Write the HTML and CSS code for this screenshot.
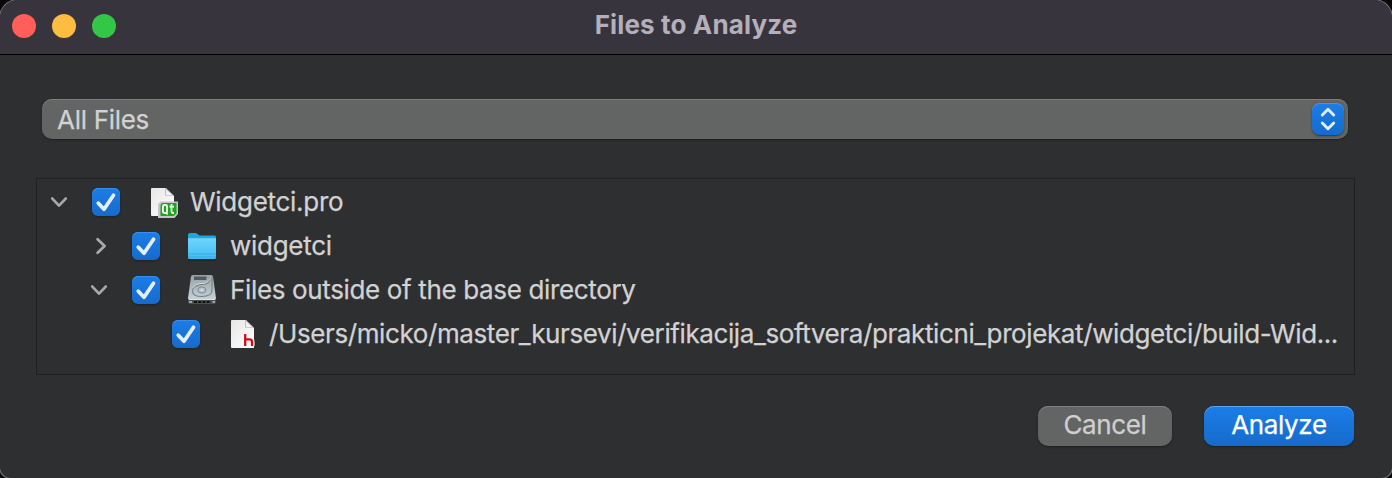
FILE: index.html
```
<!DOCTYPE html>
<html lang="en">
<head>
<meta charset="utf-8">
<title>Files to Analyze</title>
<link rel="stylesheet" href="styles.css">
</head>
<body>
<svg class="defs" width="0" height="0">
  <defs>
    <linearGradient id="page-fill" x1="0" y1="0" x2="1" y2="1"><stop offset="0" stop-color="#e6e6e6"/><stop offset="1" stop-color="#fff"/></linearGradient>
    <linearGradient id="folder-fill" x1="0" y1="0" x2="0" y2="1"><stop offset="0" stop-color="#6dd4fd"/><stop offset="1" stop-color="#44bcf1"/></linearGradient>
    <linearGradient id="disk-fill" x1="0" y1="0" x2="0" y2="1"><stop offset="0" stop-color="#98a1a6"/><stop offset="1" stop-color="#c5d1d6"/></linearGradient>
    <symbol id="check" viewBox="0 0 28 28"><path d="M6.3 15.2 12 21.2 21.5 7.3" fill="none" stroke="#e5effb" stroke-width="3.8" stroke-linecap="round" stroke-linejoin="round"/></symbol>
    <symbol id="chevron" viewBox="0 0 18 18"><path d="M2.3 5.6 9 12.6 15.7 5.6" fill="none" stroke="#a8a8a9" stroke-width="2.800" stroke-linecap="round" stroke-linejoin="round"/></symbol>
  </defs>
</svg>
<div class="dialog">
  <header class="titlebar">
    <div class="lights"><i class="light close"></i><i class="light minimize"></i><i class="light zoom"></i></div>
    <h1 class="title">Files to Analyze</h1>
  </header>
  <main class="content">
    <div class="select">
      <span class="select-text">All Files</span>
      <span class="stepper"><svg width="32" height="32" viewBox="0 0 32 32"><path d="M10.300 12 16 6.300 21.700 12M10.300 20 16 25.700 21.700 20" fill="none" stroke="#e3edfa" stroke-width="2.9" stroke-linecap="round" stroke-linejoin="round"/></svg></span>
    </div>
    <div class="tree">
      <div class="row level-0">
        <svg class="arrow" viewBox="0 0 18 18"><use href="#chevron"/></svg>
        <span class="checkbox"><svg width="28" height="28"><use href="#check"/></svg></span>
        <svg class="icon" viewBox="0 0 32 32">
          <path d="M2 2h14l8 8v20H2a1 1 0 0 1-1-1V3a1 1 0 0 1 1-1z" fill="url(#page-fill)"/>
          <path d="M15 2v7.500h9z" fill="#aaa"/><path d="M15.700 3v6h6.500z" fill="#f3f3f3"/>
          <path d="M10.500 15.500H28V28l-3.500 4H8V18.500z" fill="#c4c5c4"/>
          <path d="M12 17h14.500v10.500L23.500 30h-13V19z" fill="#17a81a"/>
          <path d="M12.900 20.500q0-1.500 1.500-1.500h1.200q1.500 0 1.500 1.500v5q0 1.500-1.500 1.500h-1.200q-1.500 0-1.500-1.500zM16 26.500l1.500 2M21.500 18v7.500q0 1.500 1.500 1.500h1M19.500 20.700h4.500" fill="none" stroke="#fff" stroke-width="1.800"/>
        </svg>
        <span class="label label-pro">Widgetci.pro</span>
      </div>
      <div class="row level-1">
        <svg class="arrow collapsed" viewBox="0 0 18 18"><use href="#chevron"/></svg>
        <span class="checkbox"><svg width="28" height="28"><use href="#check"/></svg></span>
        <svg class="icon" viewBox="0 0 32 32">
          <path d="M2 30h28" stroke="#222426" stroke-width="2" opacity=".7"/>
          <path d="M2 9V5q0-2 2-2h6l3.500 2.500H28.500q1.500 0 1.500 1.500v5H2z" fill="#21a6dc"/>
          <path d="M2 9h28v18.500q0 1.500-1.500 1.500h-25Q2 29 2 27.500z" fill="url(#folder-fill)"/>
          <path d="M2 8.700h28" stroke="#83dcfd" stroke-width=".8"/><path d="M2 24h28M2 27h28" stroke="#2faadf" stroke-width=".8"/>
        </svg>
        <span class="label label-dir">widgetci</span>
      </div>
      <div class="row level-1">
        <svg class="arrow" viewBox="0 0 18 18"><use href="#chevron"/></svg>
        <span class="checkbox"><svg width="28" height="28"><use href="#check"/></svg></span>
        <svg class="icon" viewBox="0 0 32 32">
          <path d="M2 24h28v4q0 2-2 2H4q-2 0-2-2z" fill="#4c5150"/>
          <path d="M5 2.500Q5.200 1 7 1h18q1.800 0 2 1.500L30 24q.2 1.500-1.200 1.500H3.200Q1.800 25.500 2 24z" fill="url(#disk-fill)"/>
          <path d="M8 2.500h12.500v3.500H8z" fill="#535a5e"/>
          <path d="M26 3v13q0 6.500-10 6.500-9.500 0-9.500-5.500T16 10.500c6 0 8-2.500 7.500-7" fill="none" stroke="#748087" stroke-width="1.100"/>
          <path d="M7 14q2-4.500 9-4.500 6.500 0 8.500-6" fill="none" stroke="#e0e8eb" stroke-width=".7"/>
          <ellipse cx="15.800" cy="16" rx="4" ry="3" fill="#b8c3c8" stroke="#7c898f"/><circle cx="15.800" cy="16" r="1" fill="#e2eaed"/>
          <path d="M3 25.500h26" stroke="#dce4e5" stroke-width="1"/><path d="M8 28h17" stroke="#111312" stroke-width="2" stroke-dasharray="3 1.200"/>
          <path d="M3 28h3M26.500 28H29" stroke="#9ca5a5" stroke-width="2"/>
        </svg>
        <span class="label label-outside">Files outside of the base directory</span>
      </div>
      <div class="row level-2">
        <span class="checkbox"><svg width="28" height="28"><use href="#check"/></svg></span>
        <svg class="icon" viewBox="0 0 32 32">
          <path d="M2 2h14l8 8v20H2a1 1 0 0 1-1-1V3a1 1 0 0 1 1-1z" fill="url(#page-fill)"/>
          <path d="M15 2v7.500h9z" fill="#aaa"/><path d="M15.700 3v6h6.500z" fill="#f3f3f3"/>
          <path d="M15.200 15v13M15.200 21.200h4.300q2.500 0 2.500 2.500V28" fill="none" stroke="#fff" stroke-width="5"/>
          <path d="M15.200 16v12M15.200 21.300h4.300q2.500 0 2.500 2.500V28" fill="none" stroke="#d40a13" stroke-width="2.300"/>
        </svg>
        <span class="label label-path">/Users/micko/master_kursevi/verifikacija_softvera/prakticni_projekat/widgetci/build-Wid...</span>
      </div>
    </div>
    <footer class="actions">
      <button class="button cancel"><span>Cancel</span></button>
      <button class="button analyze"><span>Analyze</span></button>
    </footer>
  </main>
</div>
</body>
</html>
```
FILE: styles.css
```
* { box-sizing: border-box; }
body { margin: 0; background: #090909; font-family: Inter, "Liberation Sans", sans-serif; font-size: 26px; color: #d2d2d2; overflow: hidden; }
.defs { display: block; }
.dialog { width: 1392px; height: 478px; background: #2e2f31; border-radius: 18px 18px 11px 11px; overflow: hidden; box-shadow: 0 0 0 1px #77767b; }
.titlebar { height: 55px; background: #38343e; border-bottom: 1px solid #000; border-radius: 18px 18px 0 0; display: grid; grid-template-columns: 1fr auto 1fr; align-items: center; padding: 0 12px; }
.lights { display: flex; gap: 16px; padding-bottom: 3px; }
.light { width: 24px; height: 24px; border-radius: 50%; }
.close { background: #ff5f58; }
.minimize { background: #febc40; }
.zoom { background: #33c748; }
.title { margin: 0; padding-bottom: 4px; font-size: 26px; line-height: 32px; font-weight: 700; color: #b4afba; letter-spacing: .14px; }
.content { padding: 44px 37px 0 36px; }
.select { height: 40px; margin: 0 7px 0 6px; padding: 0 4px 0 15px; display: flex; align-items: center; justify-content: space-between; border-radius: 10px; background: #636564; box-shadow: inset 0 1px #7e7f80, 0 1px 2px #1e1f20; }
.select-text { line-height: 40px; padding-top: 1px; letter-spacing: -.3px; }
.stepper { width: 32px; height: 32px; border-radius: 8px; background: linear-gradient(#1c7de8, #156bcb); box-shadow: inset 0 1px #4293ed, 0 1px 2px #333; }
.stepper svg { display: block; }
.tree { height: 197px; margin-top: 39px; padding: 1px 0 0 13px; border: 1px solid #1f2021; }
.row { height: 44px; display: flex; align-items: center; white-space: nowrap; }
.level-1 { padding-left: 40px; }
.level-2 { padding-left: 122px; }
.arrow { width: 18px; height: 18px; margin-right: 24px; flex: none; }
.collapsed { transform: translateX(2px) rotate(-90deg); }
.checkbox { width: 28px; height: 28px; border-radius: 6px; flex: none; background: linear-gradient(#1c7de8, #156bcb); box-shadow: inset 0 1px #398eed, 0 1px 2px #202122; }
.checkbox svg { display: block; }
.icon { width: 32px; height: 32px; margin: 0 8px 0 30px; flex: none; }
.level-1 .icon { margin: 0 12px 0 26px; }
.level-2 .icon { margin-right: 7px; }
.label { line-height: 44px; letter-spacing: -.35px; -webkit-text-stroke: .25px currentColor; }
.label-pro { letter-spacing: -.28px; }
.label-dir { letter-spacing: -.28px; }
.label-path { letter-spacing: -.395px; }
.select-text, .button { -webkit-text-stroke: .25px currentColor; }
.actions { margin-top: 31px; padding-right: 1px; display: flex; justify-content: flex-end; gap: 32px; }
.button { height: 40px; padding: 0 0 2px; border: 0; border-radius: 10px; font: inherit; line-height: 38px; letter-spacing: -.35px; }
.cancel { width: 134px; color: #cfcfcf; background: #636564; box-shadow: inset 0 1px #7e7f80, 0 1px 2px #1e1f20; }
.analyze { width: 150px; color: #fff; background: linear-gradient(#1c7de8, #156bcb); box-shadow: inset 0 1px #5ba4f3, 0 1px 2px #1e1f20; }
```
